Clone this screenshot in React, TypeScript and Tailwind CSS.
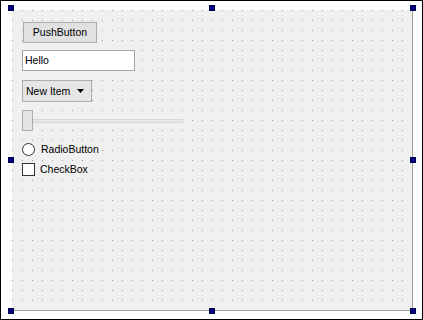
import React from 'react';

function Handle({ className }: { className: string }) {
  return <div className={`absolute w-[6px] h-[6px] bg-[#000080] border border-[#000050] ${className}`} />;
}

export default function App() {
  return (
    <div className="w-[423px] h-[320px] border border-black bg-white pl-[11px] pt-[9px] font-['Liberation_Sans',Arial,sans-serif] text-[10.5px] text-black">
      <div className="relative w-[401px] h-[301px] border-r border-b border-[#a0a0a0]">
        <div className="w-[400px] h-[300px] bg-[#f0f0f0] bg-[linear-gradient(90deg,#f0f0f0_9px,transparent_9px),linear-gradient(#f0f0f0_9px,#9a9a9a_9px)] bg-[size:10px_10px] bg-[position:1px_1px] pl-[10px] pt-[12px] flex flex-col items-start">
          <button className="ml-[1px] w-[74px] h-[21px] border border-[#adadad] bg-[#e1e1e1] flex items-center justify-center leading-none">
            PushButton
          </button>
          <div className="mt-[7px] w-[113px] h-[21px] border border-[#a5a5a5] bg-white flex items-center pl-[2px] leading-none">
            Hello
          </div>
          <div className="mt-[9px] w-[70px] h-[22px] border border-[#adadad] bg-[#e5e5e5] flex items-center pl-[3px] leading-none">
            <span>New Item</span>
            <svg width="8" height="4" viewBox="0 0 8 4" className="ml-[7px]">
              <path d="M0 0h7L3.5 4z" fill="#000" />
            </svg>
          </div>
          <div className="mt-[8px] w-[161px] h-[21px] flex items-center">
            <div className="w-[11px] h-[21px] border border-[#adadad] bg-[#e5e5e5]" />
            <div className="flex-1 h-[4px] border border-[#d6d6d6] bg-[#e7e7e7]" />
          </div>
          <div className="mt-[12px] flex items-center h-[13px]">
            <div className="w-[13px] h-[13px] rounded-full border border-[#333] bg-white" />
            <span className="ml-[6px] leading-none">RadioButton</span>
          </div>
          <div className="mt-[7px] flex items-center h-[13px]">
            <div className="w-[13px] h-[13px] border border-[#333] bg-white" />
            <span className="ml-[5px] leading-none">CheckBox</span>
          </div>
        </div>
        <Handle className="left-[-4px] top-[-5px]" />
        <Handle className="left-[197px] top-[-5px]" />
        <Handle className="left-[398px] top-[-5px]" />
        <Handle className="left-[-4px] top-[147px]" />
        <Handle className="left-[398px] top-[147px]" />
        <Handle className="left-[-4px] top-[298px]" />
        <Handle className="left-[197px] top-[298px]" />
        <Handle className="left-[398px] top-[298px]" />
      </div>
    </div>
  );
}
